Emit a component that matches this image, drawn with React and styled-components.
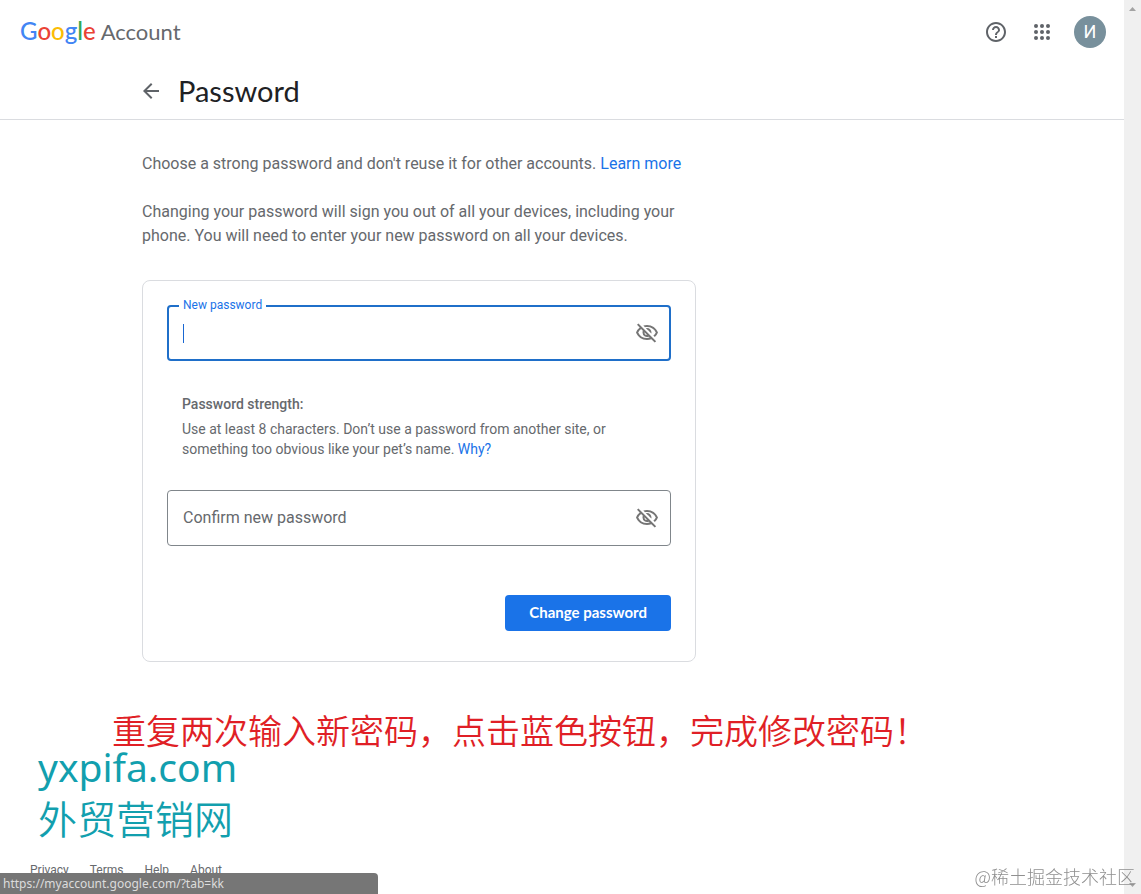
import React, { useState } from 'react'
import styled, { createGlobalStyle, css } from 'styled-components'
import { MdArrowBack, MdHelpOutline, MdOutlineVisibilityOff } from 'react-icons/md'

const sans = "Roboto, 'Liberation Sans', sans-serif"
const display = "Lato, 'Open Sans', sans-serif"
const chinese = "'Noto Sans', 'Noto Sans CJK SC', sans-serif"

const wordmark = [
    ['G', '#4285f4'],
    ['o', '#ea4335'],
    ['o', '#fbbc05'],
    ['g', '#4285f4'],
    ['l', '#34a853'],
    ['e', '#ea4335']
]

const dots = [6, 12, 18]

const footerLinks = ['Privacy', 'Terms', 'Help', 'About']

const AppsIcon = () => (
    <svg width="24" height="24" viewBox="0 0 24 24" fill="currentColor">
        {dots.map((y) => dots.map((x) => <circle key={x + '-' + y} cx={x} cy={y} r="2" />))}
    </svg>
)

const PasswordField = ({ id, label, active }) => {
    const [value, setValue] = useState('')
    const [visible, setVisible] = useState(false)

    return (
        <Field $active={active}>
            <FieldLabel htmlFor={id} $floating={active || value !== ''} $active={active}>
                {label}
            </FieldLabel>
            {active && value === '' && <Caret />}
            <FieldInput
                id={id}
                type={visible ? 'text' : 'password'}
                value={value}
                onChange={(e) => setValue(e.target.value)}
            />
            <EyeButton
                type="button"
                aria-label="Show password"
                onClick={() => setVisible(!visible)}
            >
                <MdOutlineVisibilityOff />
            </EyeButton>
        </Field>
    )
}

export default function App() {
    return (
        <Shell>
            <GlobalStyle />
            <Page>
                <TopBar>
                    <Brand href="#">
                        <Wordmark>
                            {wordmark.map(([letter, color], i) => (
                                <Letter key={i} $color={color}>
                                    {letter}
                                </Letter>
                            ))}
                        </Wordmark>
                        <Product>Account</Product>
                    </Brand>
                    <Actions>
                        <IconButton type="button" aria-label="Help">
                            <MdHelpOutline />
                        </IconButton>
                        <IconButton type="button" aria-label="Apps">
                            <AppsIcon />
                        </IconButton>
                        <Avatar type="button">И</Avatar>
                    </Actions>
                </TopBar>

                <TitleBar>
                    <TitleInner>
                        <BackLink href="#" aria-label="Back">
                            <MdArrowBack />
                        </BackLink>
                        <Title>Password</Title>
                    </TitleInner>
                </TitleBar>

                <Content>
                    <Intro>
                        Choose a strong password and don't reuse it for other accounts.{' '}
                        <Link href="#">Learn more</Link>
                    </Intro>
                    <Intro>
                        Changing your password will sign you out of all your devices,
                        including your phone. You will need to enter your new password
                        on all your devices.
                    </Intro>

                    <Card onSubmit={(e) => e.preventDefault()}>
                        <PasswordField id="new" label="New password" active />
                        <Strength>
                            <StrengthTitle>Password strength:</StrengthTitle>
                            <StrengthText>
                                Use at least 8 characters. Don’t use a password from
                                another site, or something too obvious like your pet’s
                                name. <Link href="#">Why?</Link>
                            </StrengthText>
                        </Strength>
                        <PasswordField id="confirm" label="Confirm new password" />
                        <Submit type="submit">Change password</Submit>
                    </Card>
                </Content>

                <Notes>
                    <Instruction>
                        重复两次输入新密码，点击蓝色按钮，完成修改密码！
                    </Instruction>
                    <Site>yxpifa.com</Site>
                    <Site>外贸营销网</Site>
                </Notes>

                <Footer>
                    {footerLinks.map((name) => (
                        <FooterLink key={name} href="#">
                            {name}
                        </FooterLink>
                    ))}
                </Footer>
            </Page>
            <ScrollTrack>
                <ScrollArrow viewBox="0 0 17 17">
                    <path d="M5 11 L8.5 7 L12 11 Z" />
                </ScrollArrow>
                <ScrollArrow viewBox="0 0 17 17">
                    <path d="M5 6 L8.5 10 L12 6 Z" />
                </ScrollArrow>
            </ScrollTrack>
            <StatusBar>https://myaccount.google.com/?tab=kk</StatusBar>
            <Watermark>@稀土掘金技术社区</Watermark>
        </Shell>
    )
}

const GlobalStyle = createGlobalStyle`
    * {
        box-sizing: border-box;
    }
    body {
        margin: 0;
        color: #66696d;
        background: #fff;
        font-family: ${sans};
    }
    h1, h2, p {
        margin: 0;
    }
    a {
        text-decoration: none;
    }
`

const Shell = styled.div`
    display: flex;
    height: 100vh;
    overflow: hidden;
`

const Page = styled.div`
    display: flex;
    flex: 1;
    flex-direction: column;
    min-width: 0;
`

const TopBar = styled.header`
    display: flex;
    align-items: center;
    justify-content: space-between;
    height: 64px;
    padding: 0 18px 0 20px;
`

const Brand = styled.a`
    display: flex;
    align-items: baseline;
    gap: 5px;
    font-family: ${display};
    line-height: 28px;
    padding-bottom: 2px;
`

const Wordmark = styled.span`
    font-size: 24px;
    font-weight: 500;
`

const Letter = styled.span`
    color: ${(props) => props.$color};
`

const Product = styled.span`
    color: #66696d;
    font-size: 22px;
`

const Actions = styled.div`
    display: flex;
    align-items: center;
    gap: 22px;
`

const IconButton = styled.button`
    display: flex;
    padding: 0;
    border: 0;
    color: #5f6368;
    background: none;
    font-size: 24px;
    cursor: pointer;

    & + & {
        margin-right: -2px;
    }
`

const EyeButton = styled(IconButton)`
    color: #757575;
`

const Avatar = styled.button`
    width: 32px;
    height: 32px;
    padding: 0;
    border: 0;
    border-radius: 50%;
    color: #fff;
    background: #78909c;
    font: 400 18px/32px ${sans};
`

const TitleBar = styled.div`
    padding-bottom: 10px;
    border-bottom: 1px solid #dadce0;
`

const TitleInner = styled.div`
    display: flex;
    align-items: center;
    gap: 15px;
    width: 100%;
    max-width: 846px;
    height: 45px;
    margin: 0 auto;
    padding-top: 8px;
`

const BackLink = styled.a`
    display: flex;
    color: #5f6368;
    font-size: 24px;
`

const Title = styled.h1`
    color: #202124;
    font: 400 29px/36px ${display};
`

const Content = styled.main`
    width: 100%;
    max-width: 840px;
    margin: 0 auto;
    padding-top: 32px;
`

const Intro = styled.p`
    max-width: 554px;
    margin-bottom: 24px;
    font-size: 16px;
    line-height: 24px;
`

const Link = styled.a`
    color: #1a73e8;
`

const Card = styled.form`
    display: flex;
    flex-direction: column;
    max-width: 554px;
    margin-top: 32px;
    padding: 24px 24px 30px;
    border: 1px solid #dadce0;
    border-radius: 8px;
`

const Field = styled.div`
    position: relative;
    display: flex;
    align-items: center;
    height: 56px;
    padding-right: 11px;
    border: 1px solid #80868b;
    border-radius: 4px;

    ${(props) =>
        props.$active &&
        css`
            padding-right: 10px;
            border: 2px solid #1f6fc9;
        `}
`

const FieldLabel = styled.label`
    position: absolute;
    left: 15px;
    font-size: 16px;
    line-height: 24px;

    ${(props) =>
        props.$floating &&
        css`
            top: -10px;
            left: 10px;
            padding: 0 4px;
            background: #fff;
            font-size: 12px;
            line-height: 16px;
        `}
    ${(props) => props.$active && 'color: #1a73e8;'}
`

const Caret = styled.span`
    position: absolute;
    left: 14px;
    width: 1px;
    height: 19px;
    background: #1967d2;
`

const FieldInput = styled.input`
    flex: 1;
    min-width: 0;
    height: 100%;
    padding: 0 14px;
    border: 0;
    outline: 0;
    background: transparent;
    font: 16px ${sans};
`

const Strength = styled.section`
    padding: 33px 15px 31px;
    font-size: 14px;
    line-height: 20px;
`

const StrengthTitle = styled.h2`
    margin-bottom: 5px;
    font-size: 14px;
    font-weight: 500;
`

const StrengthText = styled.p`
    max-width: 456px;
`

const Submit = styled.button`
    align-self: flex-end;
    height: 36px;
    margin-top: 49px;
    padding: 0 24px 2px;
    border: 0;
    border-radius: 4px;
    color: #fff;
    background: #1a73e8;
    font: 700 15px ${display};
`

const Notes = styled.section`
    padding: 44px 38px 0;
    font-family: ${chinese};
`

const Instruction = styled.p`
    padding-left: 74px;
    color: #e01f26;
    font-family: 'Noto Sans CJK SC', sans-serif;
    font-size: 34px;
    font-weight: 350;
    line-height: 48px;
    white-space: nowrap;
`

const Site = styled.p`
    color: #129fae;
    font-size: 39px;
    line-height: 50px;
    margin-top: -12px;

    & + & {
        margin-top: 0;
        font-family: 'Noto Sans CJK SC', sans-serif;
        font-weight: 350;
    }
`

const Footer = styled.footer`
    display: flex;
    gap: 21px;
    margin-top: auto;
    padding: 0 30px 16px;
`

const FooterLink = styled.a`
    color: #66696d;
    font-size: 12px;
    line-height: 16px;
`

const ScrollTrack = styled.div`
    display: flex;
    flex-direction: column;
    justify-content: space-between;
    width: 17px;
    background: #f0f0f0;
`

const ScrollArrow = styled.svg`
    width: 17px;
    height: 17px;
    fill: #a3a3a3;
`

const StatusBar = styled.div`
    position: fixed;
    bottom: 0;
    left: 0;
    width: 378px;
    height: 21px;
    padding-left: 3px;
    border-top-right-radius: 4px;
    color: #dcdcdc;
    background: #767676;
    font: 12px/21px 'Noto Sans', sans-serif;
`

const Watermark = styled.div`
    position: fixed;
    right: 6px;
    bottom: 6px;
    color: #8f8f8f;
    font: 300 18px/24px 'Noto Sans CJK SC', sans-serif;
`
